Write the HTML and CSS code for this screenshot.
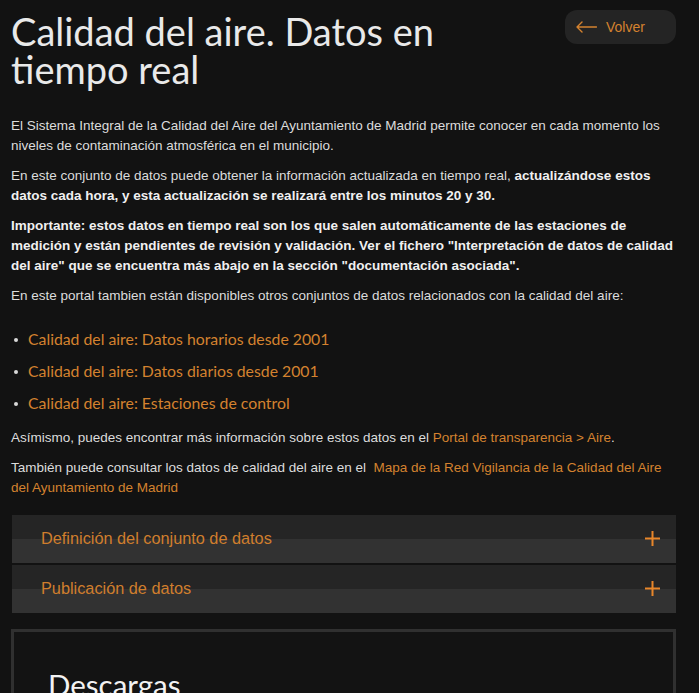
FILE: index.html
```html
<!DOCTYPE html>
<html lang="es">
<head>
<meta charset="utf-8">
<title>Calidad del aire. Datos en tiempo real</title>
<link rel="stylesheet" href="styles.css">
</head>
<body>
<main class="page">
  <header class="head">
    <h1 class="title">Calidad del aire. Datos en tiempo real</h1>
    <a class="back" href="#">
      <svg class="back-icon" width="21" height="12" viewBox="0 0 21 12" fill="none" stroke="currentColor" stroke-width="1.4" stroke-linecap="round" stroke-linejoin="round"><path d="M20.5 6H1M6 1L1 6l5 5"/></svg>
      <span>Volver</span>
    </a>
  </header>

  <section class="intro">
    <p>El Sistema Integral de la Calidad del Aire del Ayuntamiento de Madrid permite conocer en cada momento los niveles de contaminación atmosférica en el municipio.</p>
    <p>En este conjunto de datos puede obtener la información actualizada en tiempo real, <strong>actualizándose estos datos cada hora, y esta actualización se realizará entre los minutos 20 y 30.</strong></p>
    <p><strong>Importante: estos datos en tiempo real son los que salen automáticamente de las estaciones de medición y están pendientes de revisión y validación. Ver el fichero "Interpretación de datos de calidad del aire" que se encuentra más abajo en la sección "documentación asociada".</strong></p>
    <p>En este portal tambien están disponibles otros conjuntos de datos relacionados con la calidad del aire:</p>
    <ul class="links">
      <li><a href="#">Calidad del aire: Datos horarios desde 2001</a></li>
      <li><a href="#">Calidad del aire: Datos diarios desde 2001</a></li>
      <li><a href="#">Calidad del aire: Estaciones de control</a></li>
    </ul>
    <p>Asímismo, puedes encontrar más información sobre estos datos en el <a href="#">Portal de transparencia &gt; Aire</a>.</p>
    <p>También puede consultar los datos de calidad del aire en el&nbsp; <a href="#">Mapa de la Red Vigilancia de la Calidad del Aire del Ayuntamiento de Madrid</a></p>
  </section>

  <section class="accordion">
    <div class="acc-item">
      <span class="acc-label">Definición del conjunto de datos</span>
      <svg class="plus" width="15" height="15" viewBox="0 0 15 15" stroke="currentColor" stroke-width="2"><path d="M7.5 0v15M0 7.5h15"/></svg>
    </div>
    <div class="acc-item">
      <span class="acc-label">Publicación de datos</span>
      <svg class="plus" width="15" height="15" viewBox="0 0 15 15" stroke="currentColor" stroke-width="2"><path d="M7.5 0v15M0 7.5h15"/></svg>
    </div>
  </section>

  <section class="downloads">
    <h2 class="downloads-title">Descargas</h2>
  </section>
</main>
</body>
</html>
```

FILE: styles.css
```css
html, body {
  margin: 0;
  padding: 0;
  background: #121212;
}

body {
  font-family: "Liberation Sans", Arial, sans-serif;
  color: #dcdcdc;
  overflow: hidden;
}

.page {
  padding: 10px 23px 0 11px;
}

a {
  color: #d4822f;
  text-decoration: none;
}

.head {
  display: flex;
  justify-content: space-between;
  align-items: flex-start;
}

.title {
  margin: 2px 0 0;
  max-width: 500px;
  font-family: Lato, sans-serif;
  font-weight: 400;
  font-size: 38px;
  line-height: 38px;
  color: #e9e9e9;
}

.back {
  display: flex;
  align-items: center;
  gap: 9px;
  width: 111px;
  height: 34px;
  box-sizing: border-box;
  padding-left: 11px;
  border-radius: 12px;
  background: #242424;
  color: #d4822f;
  font-size: 14px;
}

.back-icon {
  display: block;
}

.intro {
  margin-top: 28px;
  font-size: 13.5px;
  line-height: 20px;
}

.intro p {
  margin: 0 0 10px;
}

.intro strong {
  color: #f0f0f0;
  font-weight: 700;
}

.links {
  list-style: none;
  margin: 17px 0 9px;
  padding: 0;
}

.links li {
  display: flex;
  align-items: center;
  height: 32px;
  font-family: Lato, sans-serif;
  font-size: 15.8px;
}

.links li::before {
  content: "";
  width: 4px;
  height: 4px;
  margin: 2px 10px 0 3px;
  border-radius: 50%;
  background: #d8d8d8;
}

.accordion {
  margin: 17px 0 0 1px;
  display: flex;
  flex-direction: column;
  gap: 2px;
}

.acc-item {
  display: flex;
  align-items: center;
  justify-content: space-between;
  height: 48px;
  padding: 0 16px 2px 29px;
  box-sizing: border-box;
  background: linear-gradient(to bottom, #252525 0, #252525 24px, #323232 24px, #323232 100%);
  color: #d07e2d;
  font-size: 16.3px;
}

.plus {
  display: block;
  color: #e8862a;
}

.downloads {
  margin-top: 16px;
  border: 3px solid #303030;
  background: #131313;
  padding: 35px 34px 30px;
  min-height: 100px;
}

.downloads-title {
  margin: 0;
  font-family: Lato, sans-serif;
  font-weight: 400;
  font-size: 29.5px;
  line-height: 36px;
  color: #f2f2f2;
}
```
